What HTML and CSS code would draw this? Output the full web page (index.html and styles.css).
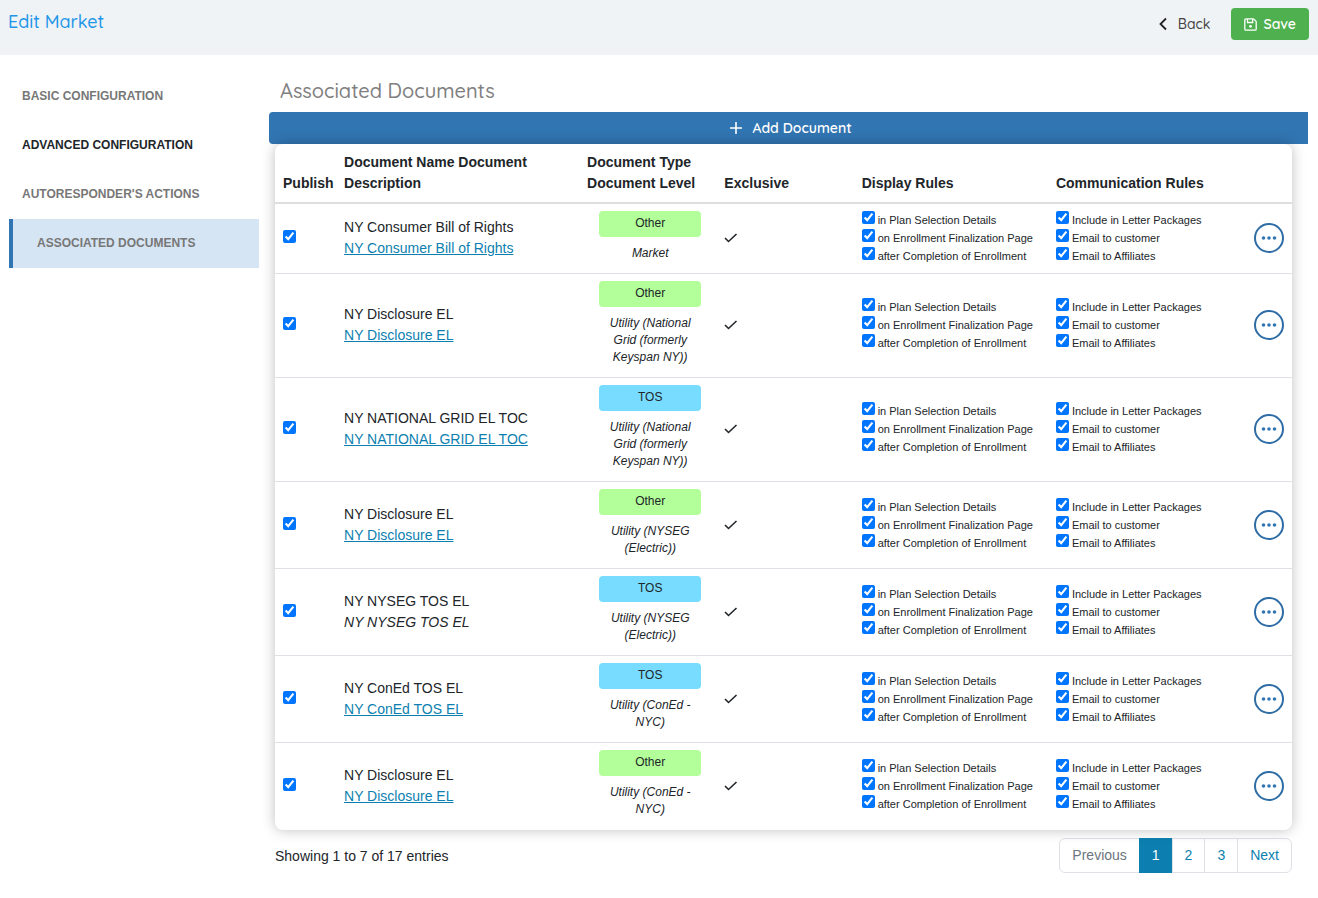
FILE: index.html
```html
<!DOCTYPE html>
<html lang="en">
<head>
  <meta charset="UTF-8" />
  <title>Edit Market</title>
  <meta name="viewport" content="width=device-width, initial-scale=1.0" />
  <link rel="stylesheet" href="styles.css">
</head>
<body>

  <!-- HEADER -->
  <header class="page-header">
    <h1>Edit Market</h1>
    <div class="header-actions">
      <a href="#" class="back-link">
        <svg width="8" height="14" viewBox="0 0 8 14"><path d="M7 1.5 1.5 7 7 12.5" fill="none" stroke="currentColor" stroke-width="1.800"/></svg>
        Back
      </a>
      <button type="button" class="save-button">
        <svg width="13" height="13" viewBox="0 0 13 13" fill="none" stroke="currentColor" stroke-width="1.300">
          <path d="M2 .8h7.600l2.600 2.600V11a1.200 1.200 0 0 1-1.200 1.200H2A1.200 1.200 0 0 1 .8 11V2A1.200 1.200 0 0 1 2 .8z"/>
          <path d="M3.500 1v3.500h5.200V1"/>
          <circle cx="6.500" cy="8.300" r="1.400" fill="currentColor" stroke="none"/>
        </svg>
        Save
      </button>
    </div>
  </header>

  <div class="layout">
    <!-- SIDE MENU -->
    <nav class="side-menu">
      <a href="#">Basic Configuration</a>
      <a href="#" class="dark">Advanced Configuration</a>
      <a href="#">Autoresponder's Actions</a>
      <a href="#" class="active">Associated Documents</a>
    </nav>

    <!-- DOCUMENTS -->
    <main class="content">
      <h2>Associated Documents</h2>
      <button type="button" class="add-button">
        <svg width="12" height="12" viewBox="0 0 12 12"><path d="M6 0v12M0 6h12" stroke="currentColor" stroke-width="1.600"/></svg>
        Add Document
      </button>

      <div class="table-card">
        <table>
          <colgroup>
            <col class="col-publish"><col class="col-name"><col class="col-type"><col class="col-exclusive">
            <col class="col-display"><col class="col-communication"><col class="col-menu">
          </colgroup>
          <thead>
            <tr>
              <th>Publish</th>
              <th>Document Name Document Description</th>
              <th>Document Type Document Level</th>
              <th>Exclusive</th>
              <th>Display Rules</th>
              <th>Communication Rules</th>
              <th></th>
            </tr>
          </thead>
          <tbody id="documents-body"></tbody>
        </table>
      </div>

      <div class="table-footer">
        <p>Showing 1 to 7 of 17 entries</p>
        <nav class="pagination">
          <a href="#" class="disabled">Previous</a>
          <a href="#" class="current">1</a>
          <a href="#">2</a>
          <a href="#">3</a>
          <a href="#">Next</a>
        </nav>
      </div>
    </main>
  </div>

  <script>
    const documents = [
      { name: "NY Consumer Bill of Rights", type: "Other", level: "Market", link: true },
      { name: "NY Disclosure EL", type: "Other", level: "Utility (National Grid (formerly Keyspan NY))", link: true },
      { name: "NY NATIONAL GRID EL TOC", type: "TOS", level: "Utility (National Grid (formerly Keyspan NY))", link: true },
      { name: "NY Disclosure EL", type: "Other", level: "Utility (NYSEG (Electric))", link: true },
      { name: "NY NYSEG TOS EL", type: "TOS", level: "Utility (NYSEG (Electric))", link: false },
      { name: "NY ConEd TOS EL", type: "TOS", level: "Utility (ConEd - NYC)", link: true },
      { name: "NY Disclosure EL", type: "Other", level: "Utility (ConEd - NYC)", link: true }
    ];

    const displayRules = ["in Plan Selection Details", "on Enrollment Finalization Page", "after Completion of Enrollment"];
    const communicationRules = ["Include in Letter Packages", "Email to customer", "Email to Affiliates"];

    function renderRules(rules) {
      return rules.map(rule => `<label class="rule"><input type="checkbox" checked>${rule}</label>`).join("");
    }

    // Build one table row per document
    document.getElementById("documents-body").innerHTML = documents.map(doc => `
      <tr>
        <td><input type="checkbox" class="publish" aria-label="Publish ${doc.name}" checked></td>
        <td>${doc.name}<br>${doc.link ? `<a href="#">${doc.name}</a>` : `<em>${doc.name}</em>`}</td>
        <td>
          <div class="doc-type">
            <span class="badge ${doc.type.toLowerCase()}">${doc.type}</span>
            <em>${doc.level}</em>
          </div>
        </td>
        <td><svg class="check" width="14" height="10" viewBox="0 0 14 10"><path d="M1 5l3.500 3.500L12.500 1" fill="none" stroke="currentColor" stroke-width="1.600"/></svg></td>
        <td>${renderRules(displayRules)}</td>
        <td>${renderRules(communicationRules)}</td>
        <td>
          <button type="button" class="menu-button" aria-label="Actions">
            <svg width="16" height="4" viewBox="0 0 16 4" fill="currentColor"><circle cx="2.500" cy="2" r="1.800"/><circle cx="8" cy="2" r="1.800"/><circle cx="13.500" cy="2" r="1.800"/></svg>
          </button>
        </td>
      </tr>`).join("");
  </script>
</body>
</html>
```
FILE: styles.css
```css
* {
  margin: 0;
  padding: 0;
  box-sizing: border-box;
}

body {
  background: #fff;
  color: #212529;
  font-family: "Liberation Sans", Arial, sans-serif;
  font-size: 14px;
  line-height: 21px;
}

button {
  border: none;
  cursor: pointer;
}

/* ---------------------------------------------
   HEADER
--------------------------------------------- */
.page-header {
  display: flex;
  justify-content: space-between;
  align-items: flex-start;
  height: 55px;
  padding: 8px 9px 0 8px;
  background: #eff3f6;
}
h1,
h2,
.back-link,
.save-button,
.add-button {
  font-family: Quicksand, Lato, sans-serif;
}
h1 {
  color: #1f97e8;
  font-size: 18px;
  font-weight: 500;
  line-height: 27px;
}
.header-actions {
  display: flex;
  gap: 21px;
}
.back-link {
  display: flex;
  align-items: center;
  gap: 11px;
  color: #444;
  font-size: 14px;
  font-weight: 500;
  text-decoration: none;
}
.back-link svg {
  color: #222;
}
.save-button {
  display: flex;
  align-items: center;
  gap: 6px;
  height: 32px;
  padding: 0 13px;
  background: #4fb04f;
  border-radius: 4px;
  color: #fff;
  font-size: 14px;
  font-weight: 600;
}

/* ---------------------------------------------
   SIDE MENU
--------------------------------------------- */
.layout {
  display: flex;
  gap: 10px;
  padding: 15px 10px 20px 9px;
}
.side-menu {
  flex: 0 0 250px;
  padding-top: 2px;
}
.side-menu a {
  display: block;
  padding: 0 13px;
  color: #777;
  font-size: 12px;
  font-weight: 700;
  line-height: 49px;
  text-decoration: none;
  text-transform: uppercase;
}
.side-menu .dark {
  color: #212529;
}
.side-menu .active {
  padding-left: 24px;
  background: #d6e5f4;
  border-left: 4px solid #3175b2;
}

/* ---------------------------------------------
   DOCUMENTS TABLE
--------------------------------------------- */
.content {
  flex: 1;
  min-width: 0;
}
h2 {
  padding: 6px 11px;
  color: #808080;
  font-size: 20px;
  font-weight: 500;
  line-height: 30px;
}
.add-button {
  display: flex;
  justify-content: center;
  align-items: center;
  gap: 10px;
  width: 100%;
  height: 32px;
  padding-left: 5px;
  background: #3175b2;
  border-radius: 4px 0 0 4px;
  color: #fff;
  font-size: 14px;
  font-weight: 600;
}
.table-card {
  position: relative;
  margin: 0 16px 0 6px;
  background: #fff;
  border-radius: 8px;
  box-shadow: 0 0 14px rgba(0, 0, 0, 0.25);
}
table {
  width: 100%;
  border-collapse: separate;
  border-spacing: 0;
  table-layout: fixed;
}
.col-publish { width: 6%; }
.col-name { width: 23.9%; }
.col-type { width: 13.5%; }
.col-exclusive { width: 13.5%; }
.col-display { width: 19.1%; }
.col-communication { width: 19.5%; }
.col-menu { width: 4.5%; }

th {
  padding: 8px;
  border-bottom: 2px solid #dedede;
  text-align: left;
  vertical-align: bottom;
}
td {
  padding: 7px 8px 8px;
  border-bottom: 1px solid #dee2e6;
  vertical-align: middle;
}
tbody tr:last-child td {
  border-bottom-color: transparent;
}
td a {
  color: #0c7fb0;
}
.publish {
  display: block;
  width: 13px;
  height: 13px;
  margin-bottom: 3px;
}
.doc-type {
  margin: 0 7px 0 12px;
  padding-bottom: 3px;
  font-size: 12px;
  line-height: 17px;
  text-align: center;
}
.badge {
  display: block;
  height: 26px;
  margin-bottom: 8px;
  padding-top: 4px;
  border-radius: 4px;
}
.badge.other {
  background: #b3ff99;
}
.badge.tos {
  background: #77dcff;
}
.check {
  display: block;
}
.rule {
  display: flex;
  gap: 3px;
  font-size: 11px;
  line-height: 18px;
  white-space: nowrap;
}
.rule input {
  width: 13px;
  height: 13px;
}
.menu-button {
  display: flex;
  justify-content: center;
  align-items: center;
  width: 30px;
  height: 30px;
  background: #fff;
  border: 2px solid #2d6ca5;
  border-radius: 50%;
  color: #3175b2;
}

/* ---------------------------------------------
   FOOTER
--------------------------------------------- */
.table-footer {
  display: flex;
  justify-content: space-between;
  align-items: flex-start;
  margin: 8px 16px 0 6px;
}
.table-footer p {
  padding-top: 8px;
}
.pagination {
  display: flex;
}
.pagination a {
  margin-left: -1px;
  padding: 6px 12px;
  background: #fff;
  border: 1px solid #dee2e6;
  color: #0c7fb0;
  text-decoration: none;
}
.pagination a:first-child {
  border-radius: 6px 0 0 6px;
}
.pagination a:last-child {
  border-radius: 0 6px 6px 0;
}
.pagination .disabled {
  color: #6c757d;
}
.pagination .current {
  background: #0c7fb0;
  border-color: #0c7fb0;
  color: #fff;
}
```
